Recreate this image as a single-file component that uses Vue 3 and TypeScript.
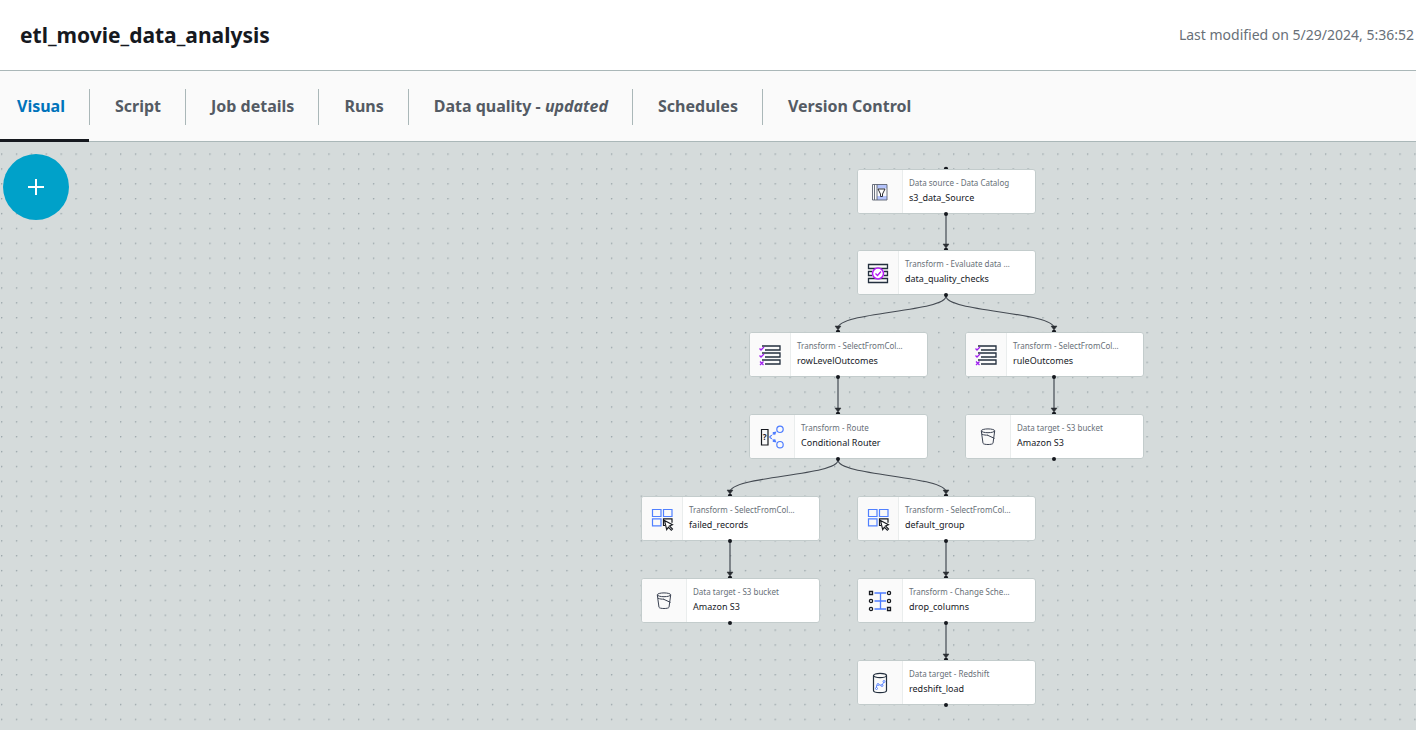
<script setup lang="ts">
import { ref } from 'vue'

type IconKind = 'catalog' | 'quality' | 'select' | 'route' | 'bucket' | 'filter' | 'schema' | 'redshift'

interface JobNode {
  id: string
  x: number
  y: number
  kind: string
  name: string
  icon: IconKind
  wide?: boolean
}

interface Tab {
  id: string
  label: string
  note?: string
}

const tabs: Tab[] = [
  { id: 'visual', label: 'Visual' },
  { id: 'script', label: 'Script' },
  { id: 'details', label: 'Job details' },
  { id: 'runs', label: 'Runs' },
  { id: 'quality', label: 'Data quality - ', note: 'updated' },
  { id: 'schedules', label: 'Schedules' },
  { id: 'version', label: 'Version Control' },
]
const activeTab = ref('visual')

// Positions are relative to the canvas origin
const nodes: JobNode[] = [
  { id: 'source', x: 857, y: 27, kind: 'Data source - Data Catalog', name: 's3_data_Source', icon: 'catalog', wide: true },
  { id: 'checks', x: 857, y: 108, kind: 'Transform - Evaluate data …', name: 'data_quality_checks', icon: 'quality' },
  { id: 'rows', x: 749, y: 190, kind: 'Transform - SelectFromCol…', name: 'rowLevelOutcomes', icon: 'select' },
  { id: 'rules', x: 965, y: 190, kind: 'Transform - SelectFromCol…', name: 'ruleOutcomes', icon: 'select' },
  { id: 'router', x: 749, y: 272, kind: 'Transform - Route', name: 'Conditional Router', icon: 'route', wide: true },
  { id: 's3rules', x: 965, y: 272, kind: 'Data target - S3 bucket', name: 'Amazon S3', icon: 'bucket', wide: true },
  { id: 'failed', x: 641, y: 354, kind: 'Transform - SelectFromCol…', name: 'failed_records', icon: 'filter' },
  { id: 'default', x: 857, y: 354, kind: 'Transform - SelectFromCol…', name: 'default_group', icon: 'filter' },
  { id: 's3failed', x: 641, y: 436, kind: 'Data target - S3 bucket', name: 'Amazon S3', icon: 'bucket', wide: true },
  { id: 'drop', x: 857, y: 436, kind: 'Transform - Change Sche…', name: 'drop_columns', icon: 'schema', wide: true },
  { id: 'load', x: 857, y: 518, kind: 'Data target - Redshift', name: 'redshift_load', icon: 'redshift', wide: true },
]

const links: [string, string][] = [
  ['source', 'checks'],
  ['checks', 'rows'],
  ['checks', 'rules'],
  ['rows', 'router'],
  ['rules', 's3rules'],
  ['router', 'failed'],
  ['router', 'default'],
  ['failed', 's3failed'],
  ['default', 'drop'],
  ['drop', 'load'],
]

const NODE_HEIGHT = 45
const CENTER = 89

function byId(id: string): JobNode {
  return nodes.find((n) => n.id === id)!
}

const edges = links.map(([from, to]) => {
  const a = byId(from)
  const b = byId(to)
  const x1 = a.x + CENTER
  const y1 = a.y + NODE_HEIGHT + 1
  const x2 = b.x + CENTER
  const y2 = b.y - 4
  const mid = (y1 + y2) / 2
  return {
    id: `${from}-${to}`,
    path: `M${x1} ${y1}C${x1} ${mid} ${x2} ${mid} ${x2} ${y2}`,
    head: `M${x2 - 3} ${y2 - 2}h6l-3 4z`,
  }
})
</script>

<template>
  <div class="page">
    <header class="header">
      <h1 class="title">etl_movie_data_analysis</h1>
      <span class="modified">Last modified on 5/29/2024, 5:36:52</span>
    </header>

    <nav class="tabs" aria-label="Job sections">
      <button
        v-for="tab in tabs"
        :key="tab.id"
        type="button"
        class="tab"
        :class="{ active: tab.id === activeTab }"
        @click="activeTab = tab.id"
      >
        <span class="tab-label">{{ tab.label }}<em v-if="tab.note">{{ tab.note }}</em></span>
      </button>
    </nav>

    <main class="canvas">
      <svg class="graph" aria-hidden="true">
        <defs>
          <pattern id="grid" width="20" height="20" patternUnits="userSpaceOnUse" patternTransform="translate(1 11.4) scale(.7438)">
            <circle cx="1" cy="1" r=".9" fill="#87949a" />
          </pattern>
        </defs>
        <rect width="100%" height="100%" fill="url(#grid)" />
        <g v-for="edge in edges" :key="edge.id">
          <path :d="edge.path" fill="none" stroke="#444a52" stroke-width="1.2" />
          <path :d="edge.head" fill="#2a2e33" stroke="#2a2e33" stroke-width=".5" />
        </g>
        <g v-for="node in nodes" :key="node.id" fill="#16191f">
          <circle :cx="node.x + CENTER" :cy="node.y" r="2.2" />
        </g>
      </svg>

      <section
        v-for="node in nodes"
        :key="node.id"
        class="node"
        :style="{ left: `${node.x}px`, top: `${node.y}px` }"
      >
        <div class="node-icon" :class="{ wide: node.wide }">
          <svg width="24" height="24" viewBox="0 0 24 24" fill="none" aria-hidden="true">
            <g v-if="node.icon === 'catalog'">
              <path d="M9 4.500h10v4H9zM9 16h10v4H9z" fill="#b4c3fb" />
              <path d="M4.500 4.500h14.500v15.500h-14.500zM6.500 4.500v15.500M9 4.500v15.500" stroke="#5b6270" stroke-width=".9" />
              <path d="M10 9h7l-2.500 5v2.500h-2v-2.500z" fill="#fff" stroke="#16191f" stroke-width=".9" />
            </g>
            <g v-else-if="node.icon === 'quality'">
              <path d="M2.500 3.500h19v4h-19zM2.500 17.500h19v4h-19zM6 10.500h-3.500v4h3.500M18 10.500h3.500v4h-3.500" stroke="#232f3e" stroke-width="1.300" />
              <circle cx="12" cy="12.500" r="5.500" fill="#fff" stroke="#b41cf5" stroke-width="1.500" />
              <path d="M9.500 12.500l2 2 3.500-4" stroke="#b41cf5" stroke-width="1.300" />
            </g>
            <g v-else-if="node.icon === 'select'">
              <path d="M4 3h18v4H7M4 10h18v4H7M4 17h18v4H7" stroke="#232f3e" stroke-width="1.300" />
              <path d="M1.500 5.500l1.500 1.500 3-3M1.500 12.500l1.500 1.500 3-3M2 18.500l3.500 3.500M5.500 18.500l-3.500 3.500" stroke="#a020f0" stroke-width="1.300" />
            </g>
            <g v-else-if="node.icon === 'route'">
              <path d="M1.500 4.500h6.500v15.500h-6.500z" stroke="#16191f" stroke-width="1.200" />
              <text x="4.750" y="15" class="glyph">?</text>
              <path d="M9.500 12l5-4M9.500 12l5 4" stroke="#4d7cff" stroke-width="1.200" stroke-dasharray="3 1" />
              <path d="M16.500 6.500l-1.500 3.800-2.600-3zM16.500 17.500l-1.500-3.800-2.600 3z" fill="#4d7cff" />
              <circle cx="20" cy="4.300" r="3.200" stroke="#4d7cff" stroke-width="1.200" />
              <circle cx="20" cy="19.700" r="3.200" stroke="#4d7cff" stroke-width="1.200" />
            </g>
            <g v-else-if="node.icon === 'bucket'" stroke="#3b4252" stroke-width="1">
              <ellipse cx="12" cy="5.800" rx="6.700" ry="1.900" />
              <path d="M5.300 6l1.700 12.300c.5 1.600 9.500 1.600 10 0L18.700 6M6 9.200c2 .9 4 1 6 1M11.500 10.200l7 3.200" />
            </g>
            <g v-else-if="node.icon === 'filter'">
              <path d="M2.500 2.500h8.500v7H2.500zM13.500 2.500H22v7h-8.500zM2.500 11.800h8.500v7H2.500z" stroke="#5080ff" stroke-width="1.200" />
              <path d="M15 18.500h-1.500v-6.700H22v4" stroke="#16191f" stroke-width="1.200" />
              <path d="M14.500 13.500l8 4.200-3 1.300 3 3-1.200 1.200-3-3-1.600 2.500z" fill="#fff" stroke="#16191f" stroke-width="1.100" />
            </g>
            <g v-else-if="node.icon === 'schema'">
              <path d="M6.500 4h11.500M6.500 12h11.500M6.500 20h11.500M12.500 4v16" stroke="#4d7cff" stroke-width="1.300" />
              <g fill="#fff" stroke="#16191f" stroke-width="1.300">
                <path d="M1.500 2.500h3v3h-3zM19.500 18.500h3v3h-3z" />
                <circle cx="21" cy="4" r="1.600" />
                <circle cx="3" cy="12" r="1.600" />
                <circle cx="21" cy="12" r="1.600" />
                <circle cx="3" cy="20" r="1.600" />
              </g>
            </g>
            <g v-else>
              <g stroke="#232f3e" stroke-width="1.200">
                <ellipse cx="12" cy="4.500" rx="6.500" ry="2.200" />
                <path d="M5.500 4.500v15c0 2.800 13 2.800 13 0v-15" />
              </g>
              <path d="M8.500 17.500v-3l1.500-1 4 1 2-4" stroke="#4d7cff" stroke-width=".9" />
              <g fill="#fff" stroke="#4d7cff" stroke-width=".9">
                <circle cx="8.500" cy="17.500" r="1" />
                <circle cx="10" cy="13.500" r="1" />
                <circle cx="14" cy="14.500" r="1" />
                <circle cx="16" cy="10.500" r="1" />
              </g>
            </g>
          </svg>
        </div>
        <div class="node-text">
          <span class="node-kind">{{ node.kind }}</span>
          <span class="node-name">{{ node.name }}</span>
        </div>
        <i class="port"></i>
      </section>

      <button type="button" class="add" aria-label="Add nodes">
        <svg width="18" height="18" viewBox="0 0 18 18" aria-hidden="true">
          <path d="M9 1v16M1 9h16" stroke="#fff" stroke-width="2" />
        </svg>
      </button>
    </main>
  </div>
</template>

<style>
body {
  margin: 0;
}
</style>

<style scoped>
.page {
  display: flex;
  flex-direction: column;
  min-height: 100vh;
  background: #fff;
  color: #16191f;
  font-family: "Noto Sans", "Open Sans", sans-serif;
}

.header {
  display: flex;
  align-items: center;
  justify-content: space-between;
  height: 70px;
  padding: 0 2px 0 20px;
  border-bottom: 1px solid #aab7b8;
}

.title {
  margin: 0;
  font-size: 21px;
  font-weight: 700;
  line-height: 28px;
}

.modified {
  color: #687078;
  font-size: 14px;
  line-height: 20px;
  white-space: nowrap;
}

.tabs {
  display: flex;
  height: 70px;
  border-bottom: 1px solid #aab7b8;
  background: #fafafa;
}

.tab {
  position: relative;
  display: flex;
  align-items: center;
  padding: 2px 0 0;
  border: 0;
  background: none;
  color: #545b64;
  font: inherit;
  font-size: 16px;
  font-weight: 700;
  white-space: nowrap;
  cursor: pointer;
}

.tab-label {
  padding: 0 24px 2px 25px;
  border-right: 1px solid #aab7b8;
  line-height: 34px;
}

.tab:first-child .tab-label {
  padding-left: 17px;
}

.tab:last-child .tab-label {
  border-right: 0;
}

.tab.active {
  color: #0073bb;
}

.tab.active::after {
  position: absolute;
  right: 1px;
  bottom: -1px;
  left: 0;
  height: 3px;
  background: #16191f;
  content: "";
}

.canvas {
  position: relative;
  flex: 1;
  min-height: 588px;
  overflow: hidden;
  background: #d5dbdb;
}

.graph {
  position: absolute;
  inset: 0;
  width: 100%;
  height: 100%;
}

.node {
  position: absolute;
  display: flex;
  box-sizing: border-box;
  width: 179px;
  height: 45px;
  border: 1px solid #c3cccc;
  border-radius: 3px;
  background: #fff;
}

.node-icon {
  display: flex;
  flex: none;
  align-items: center;
  justify-content: center;
  width: 40px;
  border-right: 1px solid #eaeded;
  border-radius: 2px 0 0 2px;
  background: #fafafa;
}

.node-icon.wide {
  width: 44px;
}

.glyph {
  fill: #16191f;
  font-size: 8px;
  font-weight: 700;
  text-anchor: middle;
}

.node-text {
  display: flex;
  flex-direction: column;
  padding: 6px 0 0 6px;
  white-space: nowrap;
}

.node-kind {
  color: #687078;
  font-size: 8px;
  line-height: 14px;
}

.node-name {
  font-size: 9px;
  line-height: 16px;
}

.port {
  position: absolute;
  bottom: -3px;
  left: 86px;
  width: 4px;
  height: 4px;
  border-radius: 50%;
  background: #16191f;
}

.add {
  position: absolute;
  top: 12px;
  left: 3px;
  display: flex;
  align-items: center;
  justify-content: center;
  width: 66px;
  height: 66px;
  padding: 0;
  border: 0;
  border-radius: 50%;
  background: #00a1c9;
  cursor: pointer;
}
</style>
